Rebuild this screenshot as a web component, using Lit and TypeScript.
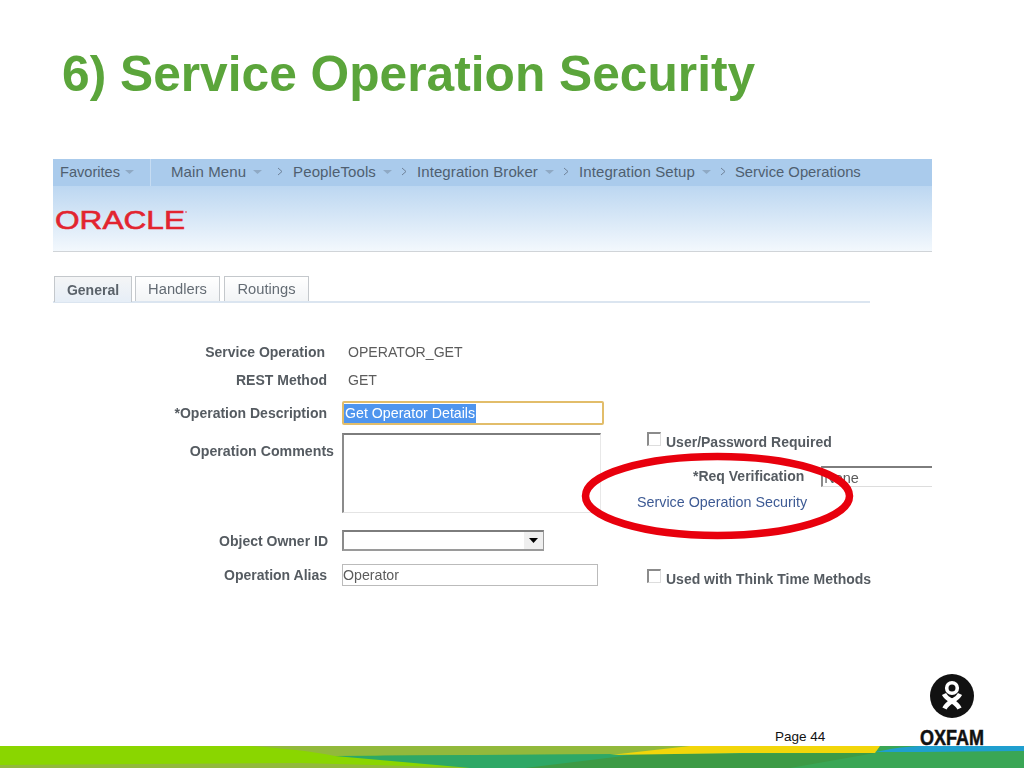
import { LitElement, html, css, svg } from "lit";
import { customElement } from "lit/decorators.js";

const caret = html`<svg class="caret" width="9" height="4" viewBox="0 0 9 4"><path d="M0 0H9L4.5 4Z" fill="#8fa9c4"/></svg>`;
const chev = html`<svg class="chev" width="6" height="9" viewBox="0 0 6 9"><path d="M1 1L5 4.5L1 8" fill="none" stroke="#6f8299" stroke-width="1"/></svg>`;

@customElement("app-root")
export class AppRoot extends LitElement {
  static styles = css`
    :host { display: block; width: 1024px; height: 768px; position: relative; overflow: hidden; background: #fff; font-family: "Liberation Sans", Arial, sans-serif; }
    .title { margin: 0; padding: 44px 0 0 62px; height: 159px; box-sizing: border-box; font-size: 49.7px; line-height: 60px; font-weight: 700; color: #5ba53b; }
    .panel { margin-left: 53px; width: 879px; height: 445px; overflow: hidden; filter: blur(0.3px); }
    .menu { height: 27px; padding-bottom: 2px; box-sizing: border-box; background: #aacbec; display: flex; align-items: center; color: #4f5f70; font-size: 15px; letter-spacing: 0.1px; white-space: nowrap; }
    .menu span { display: inline-flex; align-items: center; }
    .fav { width: 98px; height: 27px; margin-bottom: -2px; box-sizing: border-box; padding: 0 0 2px 7px; border-right: 1px solid #c6dcf2; flex: none; font-size: 14.6px; letter-spacing: 0; }
    .fav .caret { margin-left: 5px; }
    .crumbs { display: flex; align-items: center; margin-left: 20px; }
    .caret { margin-left: 7px; }
    .chev { margin: 0 10px 0 9px; }
    .first { margin-left: 6px; }
    .menu .last { font-size: 14.8px; letter-spacing: 0; margin-left: -1px; }
    .brand { height: 66px; box-sizing: border-box; border-bottom: 1px solid #d0d4d8; background: linear-gradient(#bcd7f1, #f3f8fd); display: flex; align-items: center; padding-left: 2px; }
    .brand svg { display: block; }
    .tabs { margin-top: 24px; width: 817px; height: 27px; box-sizing: border-box; border-bottom: 2px solid #dbe5f0; display: flex; gap: 3px; align-items: flex-end; padding-left: 1px; font-size: 14.7px; color: #646c74; }
    .tab { height: 25px; box-sizing: border-box; border: 1px solid #c4c8cc; border-bottom: none; background: linear-gradient(#fff, #f2f4f6); display: flex; align-items: center; justify-content: center; }
    .tab.on { height: 26px; margin-bottom: -1px; width: 78px; background: linear-gradient(#f4f5f6, #e6eef7); font-weight: 700; color: #5a626a; font-size: 14px; }
    .t2 { width: 85px; }
    .t3 { width: 85px; margin-left: 1px; }
    .form { display: flex; padding-top: 37px; color: #555b61; font-size: 14px; }
    .left { width: 552px; flex: none; }
    .row { display: flex; align-items: center; }
    .lab { width: 274px; flex: none; text-align: right; font-weight: 700; white-space: nowrap; box-sizing: border-box; }
    .val { margin-left: 23px; color: #5c5c5c; font-size: 14.1px; }
    .r1 { height: 24px; }
    .r1 .lab { width: 272px; }
    .r2 { height: 24px; margin-top: 4px; }
    .r2 .lab { width: 274px; }
    .r2 .val { margin-left: 21px; }
    .r3 { height: 24px; margin-top: 9px; }
    .r4 { align-items: flex-start; margin-top: 8px; }
    .r4 .lab { padding-top: 10px; width: 281px; font-size: 14.2px; }
    .r4 .ta { margin-left: 8px; }
    .r5 { margin-top: 17px; }
    .r6 { margin-top: 13px; }
    .r5 .lab { width: 275px; }
    .field { margin-left: 15px; }
    .sel { margin-left: 14px; }
    .in { width: 262px; height: 24px; box-sizing: border-box; border: 2px solid #e2bd6a; border-radius: 2px; display: flex; align-items: center; background: #fff; color: #fff; font-size: 14.2px; }
    .in mark { background: #4f95ee; color: #fff; height: 19px; line-height: 19px; padding: 0 1px; }
    .ta { width: 259px; height: 80px; box-sizing: border-box; border-top: 2px solid #7d7d7d; border-left: 2px solid #8b8b8b; border-right: 1px solid #e8e8e8; border-bottom: 1px solid #e4e4e4; }
    .sel { width: 202px; height: 21px; box-sizing: border-box; border-top: 2px solid #7d7d7d; border-left: 2px solid #8b8b8b; border-right: 1px solid #9a9a9a; border-bottom: 2px solid #9a9a9a; display: flex; justify-content: flex-end; }
    .arrow { width: 19px; height: 17px; background: #efefef; display: flex; align-items: center; justify-content: center; box-sizing: border-box; }
    .alias { width: 256px; height: 22px; box-sizing: border-box; border: 1px solid #bbb; margin-left: 15px; display: flex; align-items: center; color: #5c5c5c; font-size: 14.2px; }
    .right { flex: 1; font-weight: 700; padding-left: 42px; font-size: 14px; }
    .cb { display: flex; align-items: center; gap: 5px; white-space: nowrap; }
    .box { width: 14px; height: 14px; box-sizing: border-box; border-top: 2px solid #8b8b8b; border-left: 2px solid #8b8b8b; border-right: 1px solid #ddd; border-bottom: 1px solid #ddd; margin-top: -6px; }
    .c1 { margin-top: 92px; height: 20px; }
    .req { display: flex; align-items: center; margin-top: 13px; height: 22px; padding-left: 46px; white-space: nowrap; }
    .none { margin-left: 17px; width: 130px; height: 21px; box-sizing: border-box; border-top: 2px solid #7d7d7d; border-left: 2px solid #8b8b8b; border-bottom: 1px solid #ddd; font-weight: 400; padding-left: 1px; line-height: 20px; color: #5c5c5c; font-size: 14.5px; }
    .link { margin: 5px 0 0 -10px; font-weight: 400; color: #3d5a94; white-space: nowrap; height: 20px; line-height: 20px; font-size: 14.3px; }
    .c2 { margin-top: 57px; height: 20px; }
    .ring { position: absolute; left: 578px; top: 450px; pointer-events: none; }
    .page { position: absolute; left: 775px; top: 729px; font-size: 13.5px; color: #111; }
    .logo { position: absolute; left: 902px; top: 674px; width: 100px; display: flex; flex-direction: column; align-items: center; }
    .wordmark { display: block; margin-top: 3px; }
    .strip { position: absolute; left: 0; bottom: 0; display: block; }
  `;

  render() {
    return html`
      <h1 class="title">6) Service Operation Security</h1>
      <div class="panel">
        <div class="menu">
          <span class="fav">Favorites${caret}</span>
          <div class="crumbs">
            <span>Main Menu${caret}</span><span class="first">${chev}</span><span>PeopleTools${caret}</span>${chev}<span>Integration Broker${caret}</span>${chev}<span>Integration Setup${caret}</span>${chev}<span class="last">Service Operations</span>
          </div>
        </div>
        <div class="brand">
          <svg width="150" height="32" viewBox="0 0 150 32">
            <text x="0" y="26" font-family="Liberation Sans" font-size="26" fill="#e2242f" stroke="#e2242f" stroke-width="0.6" textLength="130" lengthAdjust="spacingAndGlyphs">ORACLE</text>
            <circle cx="131" cy="9" r="0.8" fill="#e2242f"/>
          </svg>
        </div>
        <div class="tabs">
          <div class="tab on">General</div>
          <div class="tab t2">Handlers</div>
          <div class="tab t3">Routings</div>
        </div>
        <div class="form">
          <div class="left">
            <div class="row r1"><div class="lab">Service Operation</div><div class="val">OPERATOR_GET</div></div>
            <div class="row r1 r2"><div class="lab">REST Method</div><div class="val">GET</div></div>
            <div class="row r3"><div class="lab">*Operation Description</div><div class="in field"><mark>Get Operator Details</mark></div></div>
            <div class="row r4"><div class="lab">Operation Comments</div><div class="ta"></div></div>
            <div class="row r5"><div class="lab">Object Owner ID</div><div class="sel"><div class="arrow"><svg width="9" height="5" viewBox="0 0 9 5"><path d="M0 0H9L4.5 5Z" fill="#000"/></svg></div></div></div>
            <div class="row r6"><div class="lab">Operation Alias</div><div class="alias">Operator</div></div>
          </div>
          <div class="right">
            <div class="cb c1"><div class="box"></div>User/Password Required</div>
            <div class="req">*Req Verification<div class="none">None</div></div>
            <div class="link">Service Operation Security</div>
            <div class="cb c2"><div class="box"></div>Used with Think Time Methods</div>
          </div>
        </div>
      </div>
      <svg class="ring" width="280" height="92" viewBox="0 0 280 92">
        <ellipse cx="139.5" cy="46" rx="132" ry="39.5" fill="none" stroke="#e8000d" stroke-width="7.5"/>
      </svg>
      <div class="page">Page 44</div>
      <div class="logo">
        <svg width="44" height="44" viewBox="0 0 44 44">
          <circle cx="22" cy="22" r="22" fill="#111"/>
          <circle cx="22" cy="14" r="5.3" fill="none" stroke="#fff" stroke-width="3.6"/>
          <path d="M14 20 C16 24 19 25.5 22 27 C25 25.5 28 24 30 20 M14.5 34.5 C16 31 19 29 22 27 C25 29 28 31 29.5 34.5" fill="none" stroke="#fff" stroke-width="4.6"/>
        </svg>
        <svg class="wordmark" width="100" height="30" viewBox="0 0 100 30">
          <text x="18" y="24" font-family="Liberation Sans" font-size="22" font-weight="700" fill="#111" stroke="#111" stroke-width="0.5" textLength="64" lengthAdjust="spacingAndGlyphs">OXFAM</text>
        </svg>
      </div>
      <svg class="strip" width="1024" height="22" viewBox="0 0 1024 22">
        ${svg`
          <rect width="1024" height="22" fill="#3aa655"/>
          <path d="M0 0H760V7H360L480 22H0Z" fill="#8ad600"/>
          <path d="M250 0H760V8L520 9 L335 10 C310 5 280 2 250 0Z" fill="#92b93c"/>
          <path d="M0 19L300 17L480 22H0Z" fill="#92b93c"/>
          <path d="M335 10L620 8 L760 7 V22 H470Z" fill="#2ea866"/>
          <path d="M525 22 L640 8 L875 7 L790 22Z" fill="#3d9a45" />
          <path d="M610 9 L690 0 H880 L875 7 H740Z" fill="#f2d60a"/>
          <path d="M875 6 C890 3 900 1 920 0 H1024 V5 L920 6Z" fill="#1f9fcf"/>
        `}
      </svg>
    `;
  }
}
